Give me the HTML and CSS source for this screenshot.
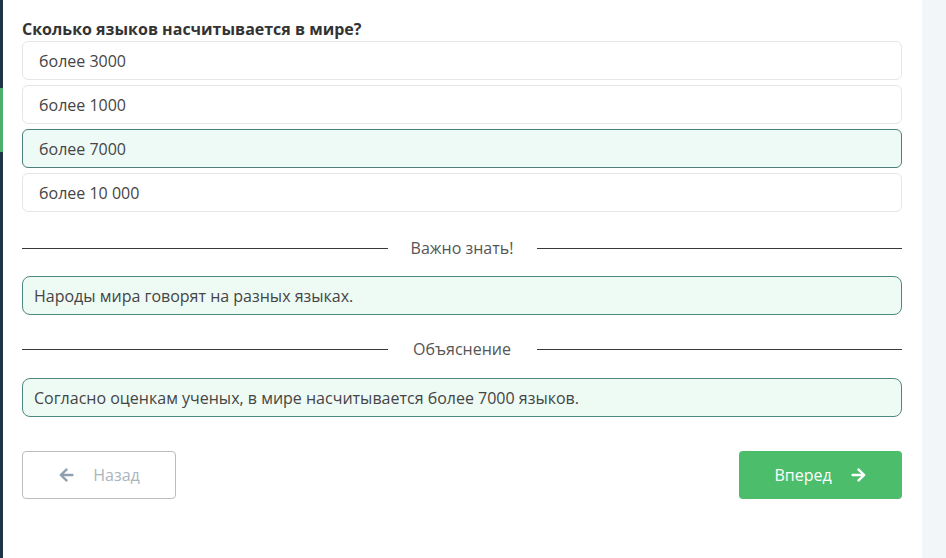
FILE: index.html
```html
<!DOCTYPE html>
<html lang="ru">
  <head>
    <meta charset="UTF-8" />
    <meta name="viewport" content="width=device-width, initial-scale=1.0" />
    <title>Тест</title>
    <link rel="stylesheet" href="styles.css">
  </head>
  <body>
    <div class="rail">
      <div class="rail-top"></div>
      <div class="rail-active"></div>
      <div class="rail-rest"></div>
    </div>
    <main class="task">
      <h2 class="question">Сколько языков насчитывается в мире?</h2>
      <ul class="options">
        <li class="option">более 3000</li>
        <li class="option">более 1000</li>
        <li class="option option-right">более 7000</li>
        <li class="option">более 10 000</li>
      </ul>
      <div class="divider divider-first"><span>Важно знать!</span></div>
      <div class="note">Народы мира говорят на разных языках.</div>
      <div class="divider"><span>Объяснение</span></div>
      <div class="note">Согласно оценкам ученых, в мире насчитывается более 7000 языков.</div>
      <div class="nav">
        <button class="btn btn-back">
          <svg viewBox="0 0 448 512" width="16" height="16"><path d="M257.5 445.1l-22.2 22.2c-9.4 9.4-24.6 9.4-33.9 0L7 273c-9.4-9.4-9.4-24.6 0-33.9L201.4 44.7c9.4-9.4 24.6-9.4 33.9 0l22.2 22.2c9.5 9.5 9.3 25-.4 34.3L136.6 216H424c13.3 0 24 10.7 24 24v32c0 13.3-10.7 24-24 24H136.6l120.5 114.8c9.8 9.3 10 24.8.4 34.3z"/></svg>
          Назад
        </button>
        <button class="btn btn-next">
          Вперед
          <svg viewBox="0 0 448 512" width="16" height="16"><path d="M190.5 66.9l22.2-22.2c9.4-9.4 24.6-9.4 33.9 0L441 239c9.4 9.4 9.4 24.6 0 33.9L246.6 467.3c-9.4 9.4-24.6 9.4-33.9 0l-22.2-22.2c-9.5-9.5-9.3-25 .4-34.3L311.4 296H24c-13.3 0-24-10.7-24-24v-32c0-13.3 10.7-24 24-24h287.4L190.9 101.2c-9.8-9.3-10-24.8-.4-34.3z"/></svg>
        </button>
      </div>
    </main>
    <aside class="side"></aside>
  </body>
</html>
```

FILE: styles.css
```css
* {
  box-sizing: border-box;
  margin: 0;
}
html,
body {
  height: 100%;
}
body {
  display: flex;
  font-family: "Open Sans", "Noto Sans", sans-serif;
  font-size: 16px;
  color: #454545;
  background: #fff;
  overflow: hidden;
}
.rail {
  width: 3px;
  display: flex;
  flex-direction: column;
  background: #1f3547;
}
.rail-top {
  height: 88px;
}
.rail-active {
  height: 64px;
  background: #4cae6c;
}
.task {
  flex: 1;
  padding: 18px 20px 0 19px;
}
.side {
  width: 24px;
  background: #f3f6f9;
}
.question {
  font-size: 16px;
  font-weight: 700;
  line-height: 22px;
  color: #333;
  margin-bottom: 1px;
}
.options {
  list-style: none;
  padding: 0;
  display: grid;
  gap: 5px;
}
.option {
  height: 39px;
  display: flex;
  align-items: center;
  padding-left: 16px;
  border: 1px solid #e6e6e6;
  border-radius: 6px;
}
.option-right {
  background: #eefaf5;
  border-color: #4d7f7b;
}
.divider {
  display: flex;
  align-items: center;
  line-height: 22px;
  color: #555;
  margin: 23px 0 18px;
}
.divider::before,
.divider::after {
  content: "";
  flex: 1;
  border-top: 1px solid #3a3a3a;
}
.divider span {
  width: 149px;
  text-align: center;
}
.divider-first {
  margin-top: 25px;
  margin-bottom: 17px;
}
.note {
  height: 39px;
  display: flex;
  align-items: center;
  padding-left: 11px;
  background: #eefaf4;
  border: 1px solid #4f887f;
  border-radius: 8px;
}
.nav {
  display: flex;
  justify-content: space-between;
  margin-top: 34px;
}
.btn {
  height: 48px;
  display: flex;
  align-items: center;
  justify-content: center;
  gap: 18px;
  font-family: inherit;
  font-size: 16px;
  border-radius: 4px;
}
.btn svg {
  width: 17px;
  height: 16px;
}
.btn-back {
  width: 154px;
  background: #fff;
  color: #a9b5c0;
  border: 1px solid #b9bdc0;
}
.btn-back svg {
  fill: #8fa1b0;
}
.btn-next {
  width: 163px;
  background: #4cbe6b;
  color: #fff;
  border: none;
}
.btn-next svg {
  fill: #fff;
}
```
